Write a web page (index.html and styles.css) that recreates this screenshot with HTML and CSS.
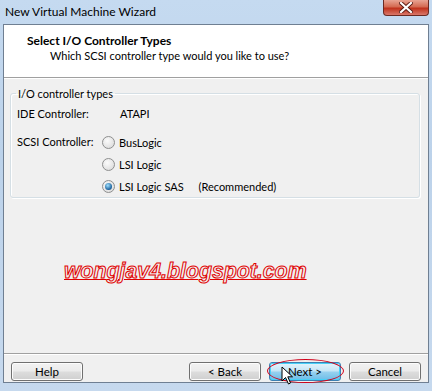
FILE: index.html
```html
<!DOCTYPE html>
<html lang="en">
<head>
    <meta charset="UTF-8">
    <title>New Virtual Machine Wizard</title>
    <link rel="stylesheet" href="styles.css">
</head>
<body>
    <div class="window">
        <div class="title-bar">
            <span class="title">New Virtual Machine Wizard</span>
            <div class="close-btn">
                <svg width="14" height="11" viewBox="0 0 14 11">
                    <path d="M2 1 L12 10 M12 1 L2 10" stroke="#5a1a12" stroke-width="4" stroke-linecap="square"/>
                    <path d="M2 1 L12 10 M12 1 L2 10" stroke="#fff" stroke-width="2.2" stroke-linecap="square"/>
                </svg>
            </div>
        </div>

        <div class="client">
            <div class="header">
                <div class="header-title">Select I/O Controller Types</div>
                <div class="header-sub">Which SCSI controller type would you like to use?</div>
            </div>

            <div class="content">
                <fieldset class="group">
                    <legend>I/O controller types</legend>
                    <div class="row">
                        <span class="label">IDE Controller:</span>
                        <span class="value">ATAPI</span>
                    </div>
                    <div class="row scsi">
                        <span class="label">SCSI Controller:</span>
                        <div class="radios">
                            <label class="radio"><span class="dot"></span>BusLogic</label>
                            <label class="radio"><span class="dot"></span>LSI Logic</label>
                            <label class="radio"><span class="dot checked"></span>LSI Logic SAS <span class="note">(Recommended)</span></label>
                        </div>
                    </div>
                </fieldset>

                <div class="watermark">wongjav4.blogspot.com</div>
            </div>

            <div class="footer">
                <button class="btn">Help</button>
                <div class="spacer"></div>
                <button class="btn">&lt; Back</button>
                <div class="next-wrap">
                    <button class="btn btn-next">Next &gt;</button>
                    <div class="ring"></div>
                    <svg class="cursor" width="14" height="20" viewBox="0 0 14 20">
                        <path d="M1 1 L1 15 L4.5 11.5 L7.5 18 L9.5 17 L6.8 10.8 L11.5 10.8 Z" fill="#fff" stroke="#000" stroke-width="1"/>
                    </svg>
                </div>
                <button class="btn">Cancel</button>
            </div>
        </div>
    </div>
</body>
</html>
```

FILE: styles.css
```css
body {
    margin: 0;
    font-family: Lato, "Liberation Sans", sans-serif;
    font-size: 11px;
    color: #000;
}

.window {
    width: 432px;
    height: 391px;
    display: flex;
    flex-direction: column;
    background: linear-gradient(to bottom, #c5daf0 0%, #bcd2ea 40%, #c6d9ee 100%);
    overflow: hidden;
}

.title-bar {
    height: 24px;
    display: flex;
    align-items: flex-start;
    justify-content: space-between;
    flex-shrink: 0;
}

.title {
    padding: 4px 0 0 5px;
    font-size: 12px;
}

.close-btn {
    width: 44px;
    height: 15px;
    margin-right: 3px;
    border: 1px solid #6b2a22;
    border-top: none;
    border-radius: 0 0 4px 4px;
    background: linear-gradient(to bottom, #e8a493 0%, #d46a52 45%, #c0321c 55%, #d9786a 100%);
    display: flex;
    align-items: center;
    justify-content: center;
}

.client {
    flex: 1;
    margin: 0 3px 8px 3px;
    border: 1px solid #6f7f92;
    background: #f0f0f0;
    display: flex;
    flex-direction: column;
}

.header {
    height: 52px;
    background: #fff;
    border-bottom: 1px solid #a0a0a0;
    box-shadow: 0 1px 0 #fff;
    flex-shrink: 0;
}

.header-title {
    font-weight: bold;
    font-size: 12px;
    padding: 8px 0 0 23px;
}

.header-sub {
    padding: 1px 0 0 46px;
}

.content {
    flex: 1;
    padding: 9px 8px 0 6px;
}

.group {
    box-sizing: border-box;
    margin: 0;
    height: 111px;
    padding: 0 0 0 6px;
    border: 1px solid #d5dfe5;
    border-radius: 3px;
    box-shadow: inset 1px 1px 0 #fff, 1px 1px 0 #fff;
}

.group legend {
    padding: 0 2px;
    margin-left: -1px;
}

.row {
    display: flex;
    height: 22px;
    align-items: center;
    margin-top: 2px;
}

.label {
    width: 86px;
    white-space: nowrap;
}

.value {
    padding-left: 17px;
}

.scsi {
    height: auto;
    align-items: flex-start;
    margin-top: 7px;
}

.scsi .label {
    width: 85px;
    line-height: 22px;
}

.radios {
    display: flex;
    flex-direction: column;
}

.radio {
    display: flex;
    align-items: center;
    height: 22px;
    white-space: pre;
}

.dot {
    width: 11px;
    height: 11px;
    border: 1px solid #8e8f8f;
    border-radius: 50%;
    background: radial-gradient(circle at 40% 35%, #fbfbfb, #d6d6d6);
    margin-right: 4px;
    position: relative;
}

.dot.checked::after {
    content: "";
    position: absolute;
    left: 2px;
    top: 2px;
    width: 7px;
    height: 7px;
    border-radius: 50%;
    background: radial-gradient(circle at 40% 35%, #9fe0ff, #1a5f9a 70%, #0e3e70);
}

.note {
    margin-left: 12px;
}

.watermark {
    margin: 61px 0 0 54px;
    font-family: "Liberation Sans", Arial, sans-serif;
    font-size: 21.3px;
    font-weight: bold;
    font-style: italic;
    color: #f0f0f0;
    -webkit-text-stroke: 1px #e00000;
    text-decoration: underline;
    text-decoration-color: #e00000;
    text-decoration-thickness: 1px;
}

.footer {
    border-top: 1px solid #a0a0a0;
    box-shadow: inset 0 1px 0 #fff;
    display: flex;
    gap: 8px;
    padding: 8px 7px 2px 7px;
    align-items: flex-start;
    height: 18px;
    flex-shrink: 0;
}

.spacer {
    flex: 1;
}

.btn {
    width: 72px;
    height: 19px;
    padding: 0;
    font-family: inherit;
    font-size: 11.5px;
    color: #000;
    border: 1px solid #707070;
    border-radius: 3px;
    background: linear-gradient(to bottom, #f2f2f2 0%, #ebebeb 48%, #dddddd 52%, #cfcfcf 100%);
    box-shadow: inset 0 0 0 1px #fcfcfc;
}

.next-wrap {
    position: relative;
}

.btn-next {
    border-color: #3c7fb1;
    background: linear-gradient(to bottom, #e5f4fc 0%, #c4e5f6 48%, #98d1ef 52%, #6cbde8 100%);
    box-shadow: inset 0 0 0 1px #48d0f8;
}

.ring {
    position: absolute;
    left: -2px;
    top: -3px;
    width: 75px;
    height: 22px;
    border: 1px solid #d0001a;
    border-radius: 50%;
}

.cursor {
    position: absolute;
    left: 12px;
    top: 4px;
}
```
